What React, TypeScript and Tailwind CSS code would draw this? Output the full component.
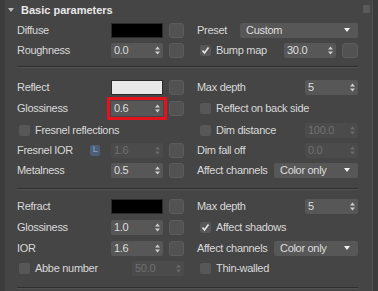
import React from "react";

const Arrows = ({ dim = false }: { dim?: boolean }) => (
  <svg width="5" height="9" viewBox="0 0 5 9" className="shrink-0">
    <polygon points="0,3.5 2.5,0.5 5,3.5" fill={dim ? "#6a6a6a" : "#cfcfcf"} />
    <polygon points="0,5.5 5,5.5 2.5,8.5" fill={dim ? "#6a6a6a" : "#cfcfcf"} />
  </svg>
);

const Spinner = ({ value, w, dim = false, hl = false }: { value: string; w: string; dim?: boolean; hl?: boolean }) => (
  <div
    className={`${w} h-[15px] flex items-center pl-[3px] pr-[3px] ${
      dim ? "bg-[#4b4b4b] text-[#707070]" : "bg-[#575757] text-[#dedede]"
    } ${hl ? "rounded-none outline outline-[3px] outline-offset-[1px] outline-[#e3121c]" : "rounded-[2px]"}`}
  >
    <span className="flex-1">{value}</span>
    <Arrows dim={dim} />
  </div>
);

const Btn = ({ w = "w-[15px]" }: { w?: string }) => (
  <div className={`${w} h-[15px] rounded-[3px] bg-[#525252] border border-[#5c5c5c] shrink-0`} />
);

const Swatch = ({ color }: { color: string }) => (
  <div className={`w-[52px] h-[15px] ${color} border border-[#2a2a2a]`} />
);

const Check = ({ checked = false }: { checked?: boolean }) => (
  <div className="w-[11px] h-[11px] rounded-[2px] bg-[#575757] shrink-0 flex items-center justify-center">
    {checked && (
      <svg width="9" height="9" viewBox="0 0 9 9">
        <polyline points="1.5,4.5 3.5,7 7.5,1.5" fill="none" stroke="#e6e6e6" strokeWidth="1.6" />
      </svg>
    )}
  </div>
);

const Dropdown = ({ value, w }: { value: string; w: string }) => (
  <div className={`${w} h-[15px] flex items-center pl-[6px] pr-[8px] rounded-[2px] bg-[#575757] text-[#dedede]`}>
    <span className="flex-1">{value}</span>
    <svg width="6" height="4" viewBox="0 0 6 4">
      <polygon points="0,0 6,0 3,4" fill="#f0f0f0" />
    </svg>
  </div>
);

const Row = ({ left, right, cls = "" }: { left: React.ReactNode; right: React.ReactNode; cls?: string }) => (
  <div className={`grid grid-cols-[167px_161px] gap-x-[13px] h-[20px] items-center ${cls}`}>
    <div className="flex items-center h-full">{left}</div>
    <div className="flex items-center h-full">{right}</div>
  </div>
);

const LeftCtl = ({ label, children, extra }: { label: string; children: React.ReactNode; extra?: React.ReactNode }) => (
  <>
    <div className="w-[94px] flex items-center shrink-0">
      <span>{label}</span>
      {extra}
    </div>
    {children}
    <div className="ml-[6px]">
      <Btn />
    </div>
  </>
);

const Sep = ({ cls }: { cls: string }) => (
  <div className={`${cls} w-[341px] h-[2px] border-t border-[#2e2e2e] border-b border-b-[#525252]`} />
);

export default function App() {
  return (
    <div className="w-[378px] h-[291px] bg-[#3c3c3c] overflow-hidden text-[11px] tracking-[-0.3px] text-[#d9d9d9] font-['Liberation_Sans',Arial,sans-serif]">
      <div className="relative ml-[5px] mr-[5px] h-full bg-[#454545] border-r border-[#505050]">
        <div className="absolute right-[2px] top-[5px] w-[7px] h-[8px] bg-[#5a5a5a] rounded-[1px]" />
        <div className="flex items-center h-[20px] pl-[3px]">
          <svg width="6" height="4" viewBox="0 0 6 4" className="mb-[1px]">
            <polygon points="0,0 6,0 3,4" fill="#bdbdbd" />
          </svg>
          <span className="ml-[7px] font-bold text-[11px] tracking-[0px] text-[#e8e8e8]">Basic parameters</span>
        </div>
        <div className="pl-[12px]">
          <Row
            left={<LeftCtl label="Diffuse"><Swatch color="bg-black" /></LeftCtl>}
            right={
              <>
                <span>Preset</span>
                <div className="ml-auto">
                  <Dropdown value="Custom" w="w-[118px]" />
                </div>
              </>
            }
          />
          <Row
            left={<LeftCtl label="Roughness"><Spinner value="0.0" w="w-[52px]" /></LeftCtl>}
            right={
              <>
                <div className="ml-[3px]"><Check checked /></div>
                <span className="ml-[5px]">Bump map</span>
                <div className="ml-auto flex items-center">
                  <Spinner value="30.0" w="w-[52px]" />
                  <div className="ml-[6px]"><Btn w="w-[16px]" /></div>
                </div>
              </>
            }
          />
          <Sep cls="mt-[6px] mb-[9px]" />
          <Row
            left={<LeftCtl label="Reflect"><Swatch color="bg-[#e8e8e8]" /></LeftCtl>}
            right={
              <>
                <span>Max depth</span>
                <div className="ml-auto"><Spinner value="5" w="w-[53px]" /></div>
              </>
            }
          />
          <Row
            cls="mt-[1px]"
            left={<LeftCtl label="Glossiness"><Spinner value="0.6" w="w-[52px]" hl /></LeftCtl>}
            right={
              <>
                <div className="ml-[3px]"><Check /></div>
                <span className="ml-[5px]">Reflect on back side</span>
              </>
            }
          />
          <Row
            cls="mt-[2px]"
            left={
              <>
                <div className="ml-[2px]"><Check /></div>
                <span className="ml-[5px]">Fresnel reflections</span>
              </>
            }
            right={
              <>
                <div className="ml-[3px]"><Check /></div>
                <span className="ml-[5px]">Dim distance</span>
                <div className="ml-auto"><Spinner value="100.0" w="w-[53px]" dim /></div>
              </>
            }
          />
          <Row
            left={
              <LeftCtl
                label="Fresnel IOR"
                extra={
                  <div className="ml-auto mr-[11px] w-[10px] h-[11px] rounded-[2px] bg-[#4d5f78] text-[#8fa6c8] text-[9px] flex items-center justify-center">
                    L
                  </div>
                }
              >
                <Spinner value="1.6" w="w-[52px]" dim />
              </LeftCtl>
            }
            right={
              <>
                <span>Dim fall off</span>
                <div className="ml-auto"><Spinner value="0.0" w="w-[53px]" dim /></div>
              </>
            }
          />
          <Row
            left={<LeftCtl label="Metalness"><Spinner value="0.5" w="w-[52px]" /></LeftCtl>}
            right={
              <>
                <span>Affect channels</span>
                <div className="ml-auto"><Dropdown value="Color only" w="w-[84px]" /></div>
              </>
            }
          />
          <Sep cls="mt-[8px] mb-[6px]" />
          <Row
            left={<LeftCtl label="Refract"><Swatch color="bg-black" /></LeftCtl>}
            right={
              <>
                <span>Max depth</span>
                <div className="ml-auto"><Spinner value="5" w="w-[53px]" /></div>
              </>
            }
          />
          <Row
            cls="mt-[1px]"
            left={<LeftCtl label="Glossiness"><Spinner value="1.0" w="w-[52px]" /></LeftCtl>}
            right={
              <>
                <div className="ml-[3px]"><Check checked /></div>
                <span className="ml-[5px]">Affect shadows</span>
              </>
            }
          />
          <Row
            cls="mt-[1px]"
            left={<LeftCtl label="IOR"><Spinner value="1.6" w="w-[52px]" /></LeftCtl>}
            right={
              <>
                <span>Affect channels</span>
                <div className="ml-auto"><Dropdown value="Color only" w="w-[84px]" /></div>
              </>
            }
          />
          <Row
            left={
              <>
                <div className="ml-[2px]"><Check /></div>
                <span className="ml-[5px]">Abbe number</span>
                <div className="ml-auto"><Spinner value="50.0" w="w-[52px]" dim /></div>
              </>
            }
            right={
              <>
                <div className="ml-[3px]"><Check /></div>
                <span className="ml-[5px]">Thin-walled</span>
              </>
            }
          />
          <Sep cls="mt-[9px]" />
        </div>
      </div>
    </div>
  );
}
